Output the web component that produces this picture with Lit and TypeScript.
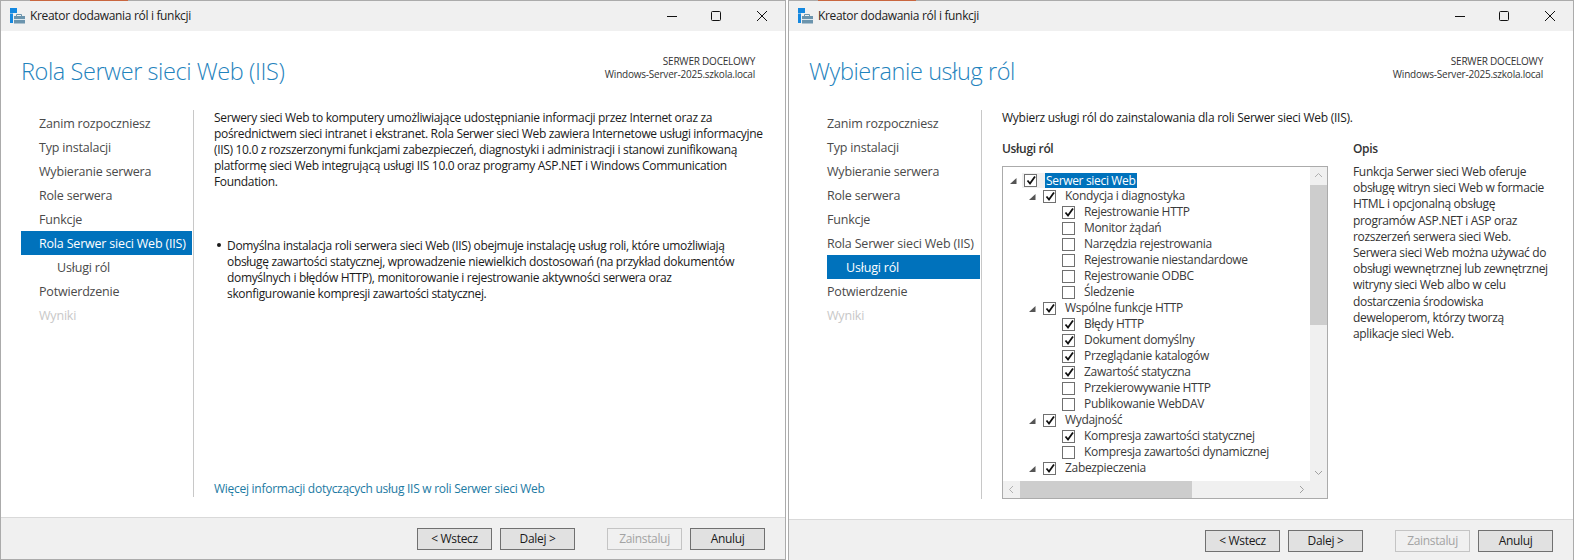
import { LitElement, css, html, svg } from "lit";
import { customElement, property } from "lit/decorators.js";

const NAV_ITEMS = [
    { label: "Zanim rozpoczniesz" },
    { label: "Typ instalacji" },
    { label: "Wybieranie serwera" },
    { label: "Role serwera" },
    { label: "Funkcje" },
    { label: "Rola Serwer sieci Web (IIS)" },
    { label: "Usługi ról", sub: true },
    { label: "Potwierdzenie" },
    { label: "Wyniki", disabled: true },
];

interface TreeRow {
    label: string;
    level: number;
    checked?: boolean;
}

const TREE_ROWS: TreeRow[] = [
    { label: "Serwer sieci Web", level: 0, checked: true },
    { label: "Kondycja i diagnostyka", level: 1, checked: true },
    { label: "Rejestrowanie HTTP", level: 2, checked: true },
    { label: "Monitor żądań", level: 2 },
    { label: "Narzędzia rejestrowania", level: 2 },
    { label: "Rejestrowanie niestandardowe", level: 2 },
    { label: "Rejestrowanie ODBC", level: 2 },
    { label: "Śledzenie", level: 2 },
    { label: "Wspólne funkcje HTTP", level: 1, checked: true },
    { label: "Błędy HTTP", level: 2, checked: true },
    { label: "Dokument domyślny", level: 2, checked: true },
    { label: "Przeglądanie katalogów", level: 2, checked: true },
    { label: "Zawartość statyczna", level: 2, checked: true },
    { label: "Przekierowywanie HTTP", level: 2 },
    { label: "Publikowanie WebDAV", level: 2 },
    { label: "Wydajność", level: 1, checked: true },
    { label: "Kompresja zawartości statycznej", level: 2, checked: true },
    { label: "Kompresja zawartości dynamicznej", level: 2 },
    { label: "Zabezpieczenia", level: 1, checked: true },
];

const appIcon = html`
    <svg class="app-icon" width="15" height="16" viewBox="0 0 15 16">
        <rect x="0" y="0" width="7" height="5" fill="#1488e0" />
        <rect x="0" y="5.5" width="3" height="9.5" fill="#1488e0" />
        <path d="M6.5 8V6.5h5V8" fill="none" stroke="#6b94ad" stroke-width="1" />
        <rect x="4" y="8" width="11" height="7.5" fill="#6b94ad" />
        <rect x="4" y="11" width="11" height="1" fill="#dce8ef" />
    </svg>
`;

const checkMark = svg`<path d="M2.5 6.5 5 9.5 10 2.5" fill="none" stroke="#111" stroke-width="1.8" />`;

@customElement("wizard-window")
export class WizardWindow extends LitElement {
    @property() heading = "";
    @property() activeItem = "";

    render() {
        return html`
            <div class="accent"></div>
            <div class="titlebar">
                ${appIcon}
                <span class="title">Kreator dodawania ról i funkcji</span>
                <div class="controls">
                    <svg width="12" height="12" viewBox="0 0 12 12">
                        <path d="M1 6.5h10" stroke="#111" fill="none" />
                    </svg>
                    <svg width="12" height="12" viewBox="0 0 12 12">
                        <rect x="1.5" y="1.5" width="9" height="9" rx="1" stroke="#111" fill="none" />
                    </svg>
                    <svg class="close" width="12" height="12" viewBox="0 0 12 12">
                        <path d="M1 1l10 10M11 1 1 11" stroke="#111" fill="none" />
                    </svg>
                </div>
            </div>
            <div class="body">
                <header>
                    <h1>${this.heading}</h1>
                    <div class="target">
                        <div>SERWER DOCELOWY</div>
                        <div>Windows-Server-2025.szkola.local</div>
                    </div>
                </header>
                <main>
                    <nav>
                        ${NAV_ITEMS.map((item) => {
                            const classes = [
                                "nav-item",
                                item.sub ? "sub" : "",
                                item.disabled ? "disabled" : "",
                                item.label === this.activeItem ? "active" : "",
                            ].join(" ");
                            return html`<div class=${classes}>${item.label}</div>`;
                        })}
                    </nav>
                    <div class="content"><slot></slot></div>
                </main>
            </div>
            <footer>
                <button>&lt; Wstecz</button>
                <button>Dalej &gt;</button>
                <button class="install" disabled>Zainstaluj</button>
                <button>Anuluj</button>
            </footer>
        `;
    }

    static styles = css`
        :host {
            position: relative;
            display: flex;
            flex-direction: column;
            height: 560px;
            box-sizing: border-box;
            border: 1px solid #ababab;
            background: #fff;
            font-family: "Open Sans", sans-serif;
            font-size: 12px;
            letter-spacing: -0.33px;
            line-height: 16px;
            color: #1a1a1a;
        }

        .accent {
            position: absolute;
            left: 29px;
            top: -1px;
            width: 98px;
            height: 1px;
            background: #c9663f;
        }

        .titlebar {
            display: flex;
            align-items: center;
            height: 30px;
            flex: none;
            background: #f0f0f0;
        }

        .app-icon {
            margin-left: 9px;
            margin-top: -1px;
        }

        .title {
            margin-left: 5px;
            color: #222;
        }

        .controls {
            display: flex;
            margin-left: auto;
            margin-right: 17px;
            gap: 32px;
        }

        .controls svg {
            display: block;
        }

        .controls .close {
            margin-left: 2px;
        }

        .body {
            flex: 1;
            display: flex;
            flex-direction: column;
            padding-bottom: 20px;
        }

        header {
            display: flex;
            justify-content: space-between;
            height: 79px;
            flex: none;
            padding: 0 30px 0 20px;
        }

        h1 {
            margin: 24px 0 0;
            font-size: 23.5px;
            font-weight: 300;
            line-height: 32px;
            letter-spacing: -0.42px;
            color: #1f83bd;
        }

        .target {
            margin-top: 24px;
            text-align: right;
            font-size: 10px;
            line-height: 13px;
            letter-spacing: -0.22px;
            color: #333;
        }

        main {
            flex: 1;
            display: flex;
            min-height: 0;
        }

        nav {
            width: 172px;
            margin-left: 20px;
            padding-top: 1px;
            flex: none;
            color: #4a4a4a;
            font-size: 12.5px;
            letter-spacing: -0.19px;
        }

        .nav-item {
            height: 24px;
            width: 171px;
            padding-left: 18px;
            box-sizing: border-box;
            line-height: 25px;
            white-space: nowrap;
        }

        .nav-item.sub {
            padding-left: 36px;
        }

        .nav-item.disabled {
            color: #c8c8c8;
        }

        .nav-item.active {
            background: #0072bc;
            color: #fff;
        }

        .nav-item.sub.active {
            margin-left: 18px;
            width: 153px;
            padding-left: 19px;
        }

        .content {
            flex: 1;
            display: flex;
            flex-direction: column;
            min-width: 0;
            border-left: 1px solid #c8c8c8;
            padding-left: 20px;
        }

        footer {
            flex: none;
            display: flex;
            align-items: center;
            height: 42px;
            box-sizing: border-box;
            padding: 0 20px 0 416px;
            gap: 8px;
            border-top: 1px solid #d9d9d9;
            background: #f0f0f0;
        }

        button {
            width: 75px;
            height: 22px;
            padding: 0;
            border: 1px solid #707070;
            background: #e1e1e1;
            font: inherit;
            letter-spacing: inherit;
            color: #1a1a1a;
        }

        button:disabled {
            border-color: #c4c4c4;
            background: #f0f0f0;
            color: #a3a3a3;
        }

        .install {
            margin-left: 24px;
        }
    `;
}

@customElement("app-root")
export class AppRoot extends LitElement {
    renderRow(row: TreeRow, index: number) {
        const hasChildren = row.level < 2;
        return html`
            <div class="row level-${row.level} ${index === 0 ? "current" : ""}">
                ${hasChildren
                    ? html`<svg class="expander" width="7" height="6" viewBox="0 0 7 6">
                          <path d="M6.5 0v6H0z" fill="#555" />
                      </svg>`
                    : ""}
                <span class="check">
                    ${row.checked
                        ? html`<svg width="12" height="12" viewBox="0 0 12 12">${checkMark}</svg>`
                        : ""}
                </span>
                <span class="row-label">${row.label}</span>
            </div>
        `;
    }

    renderRolePage() {
        return html`
            <wizard-window heading="Rola Serwer sieci Web (IIS)" activeItem="Rola Serwer sieci Web (IIS)">
                <div class="role-page">
                    <p class="lead">
                        Serwery sieci Web to komputery umożliwiające udostępnianie informacji przez Internet oraz za<br />
                        pośrednictwem sieci intranet i ekstranet. Rola Serwer sieci Web zawiera Internetowe usługi informacyjne<br />
                        (IIS) 10.0 z rozszerzonymi funkcjami zabezpieczeń, diagnostyki i administracji i stanowi zunifikowaną<br />
                        platformę sieci Web integrującą usługi IIS 10.0 oraz programy ASP.NET i Windows Communication<br />
                        Foundation.
                    </p>
                    <div class="bullet">
                        <span class="dot"></span>
                        <p>
                            Domyślna instalacja roli serwera sieci Web (IIS) obejmuje instalację usług roli, które umożliwiają<br />
                            obsługę zawartości statycznej, wprowadzenie niewielkich dostosowań (na przykład dokumentów<br />
                            domyślnych i błędów HTTP), monitorowanie i rejestrowanie aktywności serwera oraz<br />
                            skonfigurowanie kompresji zawartości statycznej.
                        </p>
                    </div>
                    <a class="more">Więcej informacji dotyczących usług IIS w roli Serwer sieci Web</a>
                </div>
            </wizard-window>
        `;
    }

    renderServicesPage() {
        return html`
            <wizard-window heading="Wybieranie usług ról" activeItem="Usługi ról">
                <div class="services-page">
                    <p class="intro">Wybierz usługi ról do zainstalowania dla roli Serwer sieci Web (IIS).</p>
                    <div class="columns">
                        <section class="tree-column">
                            <h2>Usługi ról</h2>
                            <div class="tree-box">
                                <div class="tree-top">
                                    <div class="tree-clip">
                                        <div class="tree">${TREE_ROWS.map((r, i) => this.renderRow(r, i))}</div>
                                    </div>
                                    <div class="v-scroll">
                                        <svg width="17" height="17" viewBox="0 0 17 17">
                                            <path d="M5 10l3.5-3.5L12 10" fill="none" stroke="#b0b0b0" />
                                        </svg>
                                        <div class="v-thumb"></div>
                                        <svg class="v-down" width="17" height="17" viewBox="0 0 17 17">
                                            <path d="M5 7l3.5 3.5L12 7" fill="none" stroke="#a0a0a0" />
                                        </svg>
                                    </div>
                                </div>
                                <div class="h-scroll">
                                    <svg width="17" height="17" viewBox="0 0 17 17">
                                        <path d="M10 5 6.5 8.5 10 12" fill="none" stroke="#b0b0b0" />
                                    </svg>
                                    <div class="h-thumb"></div>
                                    <svg class="h-right" width="17" height="17" viewBox="0 0 17 17">
                                        <path d="M7 5l3.5 3.5L7 12" fill="none" stroke="#a0a0a0" />
                                    </svg>
                                    <div class="corner"></div>
                                </div>
                            </div>
                        </section>
                        <section class="description">
                            <h2>Opis</h2>
                            <p>
                                Funkcja Serwer sieci Web oferuje<br />
                                obsługę witryn sieci Web w formacie<br />
                                HTML i opcjonalną obsługę<br />
                                programów ASP.NET i ASP oraz<br />
                                rozszerzeń serwera sieci Web.<br />
                                Serwera sieci Web można używać do<br />
                                obsługi wewnętrznej lub zewnętrznej<br />
                                witryny sieci Web albo w celu<br />
                                dostarczenia środowiska<br />
                                deweloperom, którzy tworzą<br />
                                aplikacje sieci Web.
                            </p>
                        </section>
                    </div>
                </div>
            </wizard-window>
        `;
    }

    render() {
        return html`
            <div class="desktop">${this.renderRolePage()} ${this.renderServicesPage()}</div>
        `;
    }

    static styles = css`
        :host {
            display: block;
            width: 1574px;
            height: 560px;
            overflow: hidden;
            background: #fff;
        }

        .desktop {
            display: grid;
            grid-template-columns: 786px 786px;
            gap: 2px;
        }

        p {
            margin: 0;
            white-space: nowrap;
        }

        .role-page,
        .services-page {
            flex: 1;
            display: flex;
            flex-direction: column;
            height: 386px;
        }

        .bullet {
            display: flex;
            margin-top: 48px;
            padding-left: 3px;
        }

        .dot {
            width: 4px;
            height: 4px;
            margin-top: 5px;
            margin-right: 6px;
            border-radius: 50%;
            background: #1a1a1a;
            flex: none;
        }

        .more {
            margin-top: auto;
            color: #1c7aa3;
            letter-spacing: -0.27px;
        }

        .intro {
            margin-bottom: 15px;
            letter-spacing: -0.26px;
        }

        .columns {
            flex: 1;
            display: flex;
            gap: 25px;
            min-height: 0;
        }

        h2 {
            margin: 0 0 9px;
            font-size: 12px;
            font-weight: 600;
            line-height: 16px;
            color: #333;
        }

        .tree-column {
            width: 326px;
            display: flex;
            flex-direction: column;
            flex: none;
        }

        .tree-box {
            flex: 1;
            display: flex;
            flex-direction: column;
            min-height: 0;
            border: 1px solid #ababab;
        }

        .tree-top {
            flex: 1;
            display: flex;
            min-height: 0;
        }

        .tree-clip {
            flex: 1;
            margin-bottom: 5px;
            overflow: hidden;
        }

        .tree {
            padding-top: 5px;
        }

        .row {
            position: relative;
            display: flex;
            align-items: center;
            height: 16px;
            white-space: nowrap;
            color: #3a3a3a;
        }

        .level-0 {
            padding-left: 21px;
        }

        .level-1 {
            padding-left: 40px;
        }

        .level-2 {
            padding-left: 59px;
        }

        .expander {
            position: absolute;
            top: 6px;
            margin-left: -14px;
        }

        .check {
            width: 13px;
            height: 13px;
            box-sizing: border-box;
            border: 1px solid #707070;
            background: #fff;
            flex: none;
            display: block;
        }

        .check svg {
            display: block;
            margin: -0.5px;
        }

        .row-label {
            margin-left: 8px;
            padding: 0 1px;
        }

        .current {
            background: linear-gradient(#f0f0f0, #f0f0f0) 19px 1px / 23px 15px no-repeat;
        }

        .current .row-label {
            background: #0072bc;
            color: #fff;
            line-height: 15px;
        }

        .v-scroll {
            width: 17px;
            flex: none;
            display: flex;
            flex-direction: column;
            background: #f0f0f0;
        }

        .v-scroll svg,
        .h-scroll svg {
            display: block;
            flex: none;
        }

        .v-thumb {
            height: 140px;
            margin-top: 1px;
            background: #cdcdcd;
        }

        .v-down {
            margin-top: auto;
        }

        .h-scroll {
            flex: none;
            display: flex;
            height: 17px;
            background: #f0f0f0;
        }

        .h-thumb {
            width: 172px;
            background: #cdcdcd;
        }

        .h-right {
            margin-left: auto;
        }

        .corner {
            width: 17px;
            flex: none;
        }

        .description {
            flex: none;
        }

        .description h2 {
            margin-bottom: 7px;
        }

        .description p {
            color: #333;
            line-height: 16.2px;
        }
    `;
}
